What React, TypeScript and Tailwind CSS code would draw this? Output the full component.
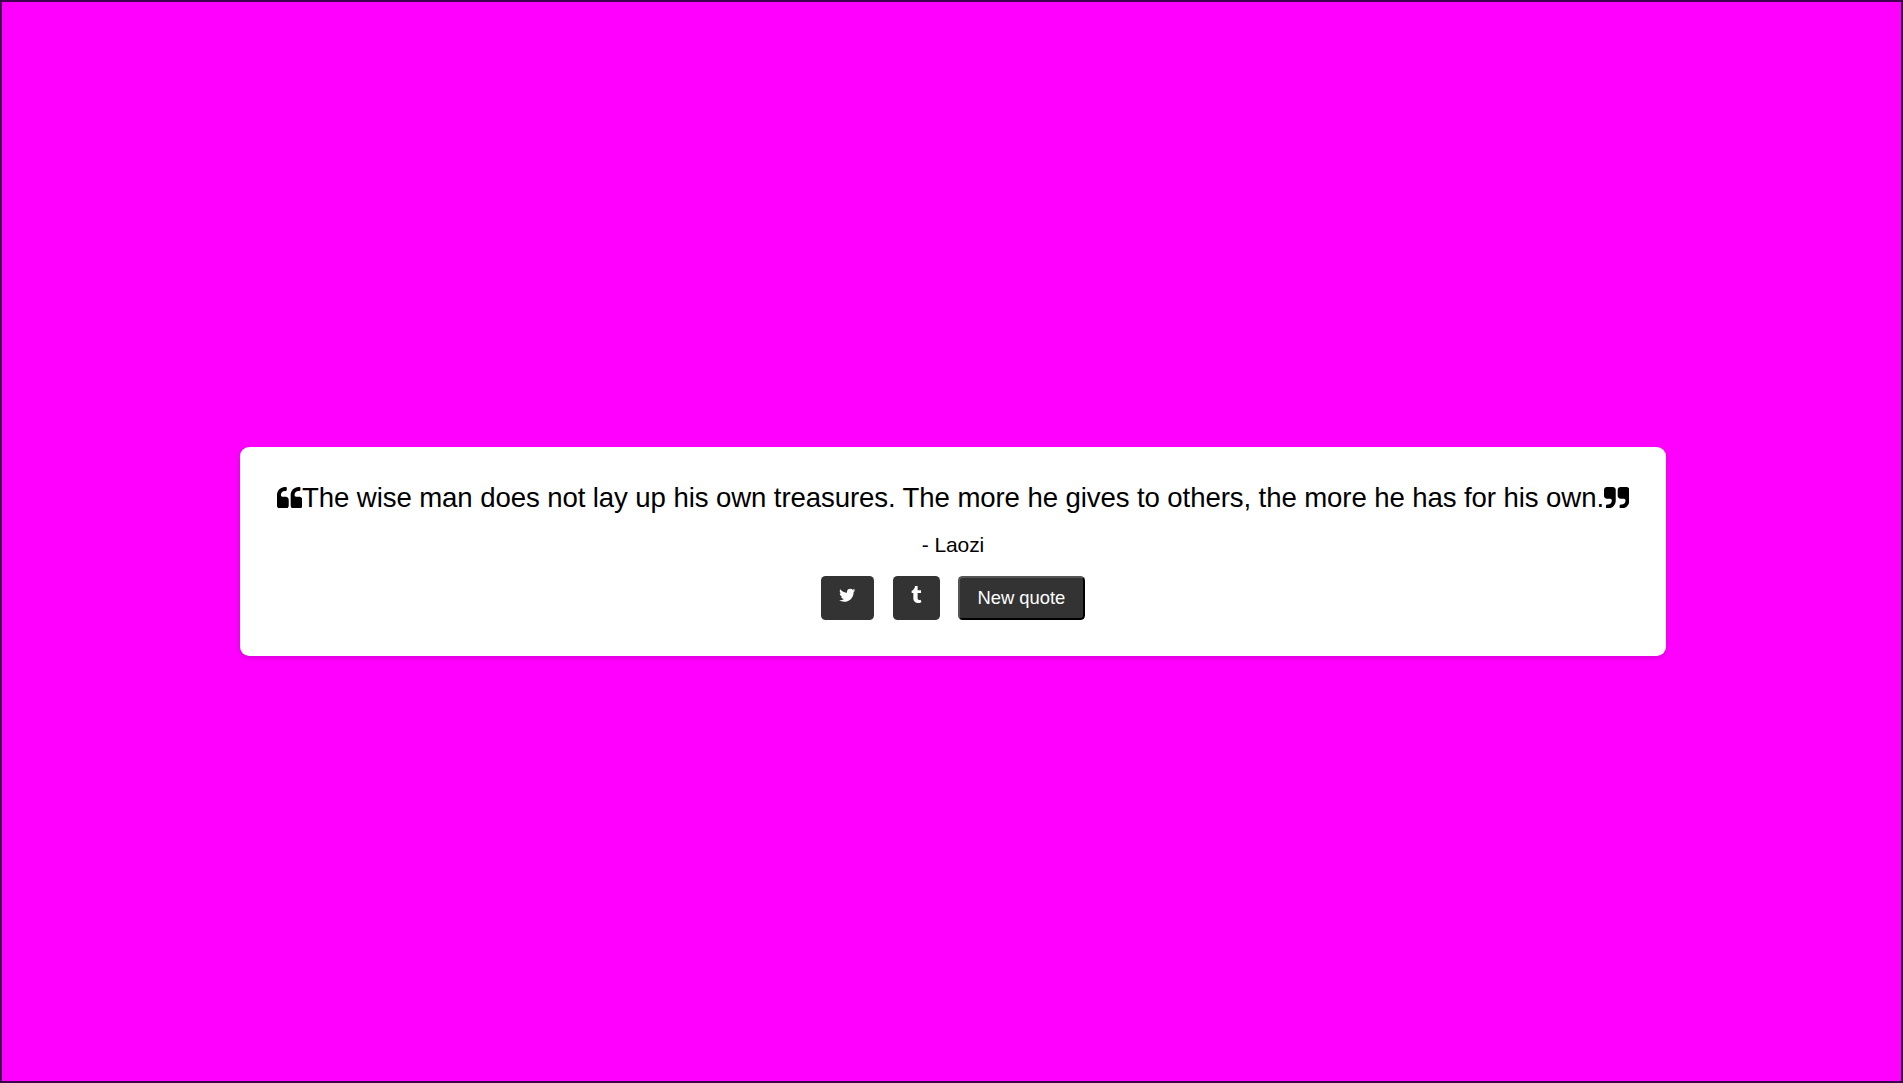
const quoteLeft = "M832 960v384q0 80-56 136t-136 56h-384q-80 0-136-56t-56-136v-704q0-104 40.5-198.5t109.5-163.5 163.5-109.5 198.5-40.5h64q26 0 45 19t19 45v128q0 26-19 45t-45 19h-64q-106 0-181 75t-75 181v32q0 40 28 68t68 28h224q80 0 136 56t56 136z";
const quoteRight = "M832 320v704q0 104-40.5 198.5t-109.5 163.5-163.5 109.5-198.5 40.5h-64q-26 0-45-19t-19-45v-128q0-26 19-45t45-19h64q106 0 181-75t75-181v-32q0-40-28-68t-68-28h-224q-80 0-136-56t-56-136v-384q0-80 56-136t136-56h384q80 0 136 56t56 136z";
const twitter = "M1684 408q-67 98-162 167 1 14 1 42 0 130-38 259.5t-115.5 248.5-184.5 210.5-258 146-323 54.5q-271 0-496-145 35 4 78 4 225 0 401-138-105-2-188-64.5t-114-159.5q33 5 61 5 43 0 85-11-112-23-185.5-111.5t-73.5-205.5v-4q68 38 146 41-66-44-105-115t-39-154q0-88 44-163 121 149 294.5 238.5t371.5 99.5q-8-38-8-74 0-134 94.5-228.5t228.5-94.5q140 0 236 102 109-21 205-78-37 115-142 178 93-10 186-50z";
const tumblr = "M1328 1329l80 237q-23 35-111 66t-177 32q-104 2-190.5-26t-142.5-74-95-106-55.5-120-16.5-118v-544h-168v-215q72-26 129-69.5t91-90 58-102 34-99 15-88.5q1-5 4.5-8.5t7.5-3.5h244v424h333v252h-334v518q0 30 6.5 56t22.5 52.5 49.5 41.5 81.5 14q78-2 134-29z";

function QuoteMark({ d }: { d: string }) {
  return (
    <svg viewBox="64 128 1664 1408" className="mb-[1.5px] h-[21.5px] w-[25.4px] shrink-0 fill-black" aria-hidden="true">
      <path d={d} />
      <path d={d} transform="translate(896 0)" />
    </svg>
  );
}

export default function App() {
  return (
    <main className="flex h-[1083px] w-[1903px] items-start justify-center border-2 border-[#400050] bg-[#ff00ff] pt-[445px] pl-[3px] font-['Liberation_Sans',Arial,sans-serif] text-black">
      <section className="flex h-[209px] w-[1426px] flex-col items-center rounded-[9.2px] bg-white pt-[35px] shadow-[0_2px_5px_rgba(0,0,0,0.15)]">
        <p className="flex h-8 items-center whitespace-nowrap text-[27.6px] leading-8 tracking-[-0.1px]">
          <QuoteMark d={quoteLeft} />
          <span>The wise man does not lay up his own treasures. The more he gives to others, the more he has for his own.</span>
          <QuoteMark d={quoteRight} />
        </p>
        <p className="mt-[19px] text-[21px] leading-6 tracking-[-0.1px]">- Laozi</p>
        <div className="mt-[19px] flex gap-[18.4px]">
          <a href="#" aria-label="Tweet" className="flex h-11 w-[53px] justify-center rounded-[4.6px] bg-[#333] pt-[10.3px]">
            <svg viewBox="0 0 1792 1792" className="size-[18.4px] fill-white"><path d={twitter} /></svg>
          </a>
          <a href="#" aria-label="Post to Tumblr" className="flex h-11 w-[47px] justify-center rounded-[4.6px] bg-[#333] pt-[10.3px] pl-px">
            <svg viewBox="0 0 1792 1792" className="size-[18.4px] fill-white"><path d={tumblr} /></svg>
          </a>
          <button className="h-11 w-[127px] rounded-[4.6px] border-2 border-t-[#555] border-r-black border-b-black border-l-[#555] bg-[#333] pb-px text-[18.4px] text-white">New quote</button>
        </div>
      </section>
    </main>
  );
}
